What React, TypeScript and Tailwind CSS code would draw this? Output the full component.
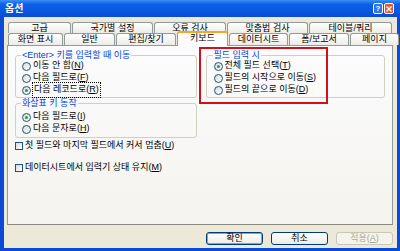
import type { ReactNode } from 'react';

const BACK_TABS: [string, number][] = [
  ['고급', 63],
  ['국가별 설정', 81],
  ['오류 검사', 72],
  ['맞춤법 검사', 81],
  ['테이블/쿼리', 83],
];

const FRONT_TABS: [string, number][] = [
  ['화면 표시', 55],
  ['일반', 51],
  ['편집/찾기', 60],
  ['키보드', 51],
  ['데이터시트', 59],
  ['폼/보고서', 60],
  ['페이지', 49],
];

function Tab({ label, w, selected }: { label: string; w: number; selected?: boolean }) {
  if (selected) {
    return (
      <div
        style={{ width: w }}
        className="relative z-10 -mt-[2px] h-[15px] shrink-0 rounded-t-[3px] border-x border-t-2 border-x-[#919b9c] border-t-[#f5a623] bg-[#fcfcfe] text-center leading-[11px]"
      >
        {label}
      </div>
    );
  }
  return (
    <div
      style={{ width: w }}
      className="h-full shrink-0 rounded-t-[3px] border-x border-t border-[#919b9c] bg-[linear-gradient(180deg,#ffffff,#ecebe6)] text-center leading-[11px]"
    >
      {label}
    </div>
  );
}

function Radio({ checked, focus, children }: { checked?: boolean; focus?: boolean; children: ReactNode }) {
  return (
    <div className="flex h-[12px] items-center gap-[2px]">
      <span className="flex h-[9px] w-[9px] shrink-0 items-center justify-center rounded-full border border-[#1c5180] bg-[linear-gradient(135deg,#dcd9cf,#ffffff)]">
        {checked && <span className="h-[3px] w-[3px] rounded-full bg-[#2a9a2a]" />}
      </span>
      <span className={focus ? 'px-[1px] outline-1 outline-dotted outline-black' : ''}>{children}</span>
    </div>
  );
}

function Check({ children }: { children: ReactNode }) {
  return (
    <div className="flex h-[12px] items-center gap-[2px]">
      <span className="h-[8px] w-[8px] shrink-0 border border-[#1c5180] bg-[linear-gradient(135deg,#dcd9cf,#ffffff)]" />
      <span>{children}</span>
    </div>
  );
}

function Group({ title, children, className }: { title: string; children: ReactNode; className?: string }) {
  return (
    <fieldset className={`rounded-[3px] border border-[#d0d0bf] px-[6px] ${className ?? ''}`}>
      <legend className="ml-[-1px] px-[1px] leading-[10px] text-[#0046d5]">{title}</legend>
      {children}
    </fieldset>
  );
}

function Button({ children, primary, disabled }: { children: ReactNode; primary?: boolean; disabled?: boolean }) {
  return (
    <div
      className={`flex h-[13px] w-[57px] items-center justify-center rounded-[3px] border leading-none ${
        disabled
          ? 'border-[#c9c7ba] bg-[#f5f4ea] text-[#aca899]'
          : 'border-[#003c74] bg-[linear-gradient(180deg,#ffffff,#ecebe6)]'
      } ${primary ? 'shadow-[inset_0_0_0_1px_#7aa6e8]' : ''}`}
    >
      {children}
    </div>
  );
}

export default function App() {
  return (
    <div className="flex h-[251px] w-[400px] flex-col bg-[#0a4ad6] font-['Liberation_Sans','Noto_Sans_CJK_KR',sans-serif] text-[9px] text-black">
      {/* title bar */}
      <div className="flex h-[17px] items-center justify-between bg-[linear-gradient(180deg,#3b8ff7_0%,#0c60e6_25%,#0756e0_70%,#0a4bd0_100%)] pl-[5px] pr-[6px]">
        <span className="text-[10px] font-bold text-white">옵션</span>
        <div className="flex gap-[1px]">
          <span className="flex h-[11px] w-[10px] items-center justify-center rounded-[2px] border border-white bg-[#2b74f0] text-[8px] font-bold leading-none text-white">?</span>
          <span className="flex h-[11px] w-[10px] items-center justify-center rounded-[2px] border border-white bg-[#e0582e]">
            <svg width="6" height="6" viewBox="0 0 6 6">
              <path d="M0.5 0.5L5.5 5.5M5.5 0.5L0.5 5.5" stroke="white" strokeWidth="1.4" />
            </svg>
          </span>
        </div>
      </div>

      {/* body */}
      <div className="mb-[3px] ml-[4px] mr-[3px] flex flex-1 flex-col bg-[#ece9d8] pl-[3px] pr-[4px] pt-[5px]">
        <div className="ml-[1px] flex h-[11px] gap-[1px]">
          {BACK_TABS.map(([l, w]) => (
            <Tab key={l} label={l} w={w} />
          ))}
        </div>
        <div className="ml-[1px] flex h-[12px] items-start gap-[1px]">
          {FRONT_TABS.map(([l, w]) => (
            <Tab key={l} label={l} w={w} selected={l === '키보드'} />
          ))}
        </div>

        <div className="relative flex h-[180px] gap-[9px] border border-[#919b9c] border-b-[#8c8a80] bg-[linear-gradient(180deg,#fcfcfe,#f4f3ee)] px-[7px] pt-[4px]">
          <div className="flex w-[182px] flex-col">
            <Group title="<Enter> 키를 입력할 때 이동" className="pb-[1px]">
              <Radio>
                이동 안 함(<u>N</u>)
              </Radio>
              <Radio>
                다음 필드로(<u>F</u>)
              </Radio>
              <Radio checked focus>
                다음 레코드로(<u>R</u>)
              </Radio>
            </Group>
            <Group title="화살표 키 동작" className="pb-[2px]">
              <div className="mt-[3px]" />
              <Radio checked>
                다음 필드로(<u>I</u>)
              </Radio>
              <Radio>
                다음 문자로(<u>H</u>)
              </Radio>
            </Group>
            <div className="mt-[2px]">
              <Check>
                첫 필드와 마지막 필드에서 커서 멈춤(<u>U</u>)
              </Check>
            </div>
            <div className="mt-[10px]">
              <Check>
                데이터시트에서 입력기 상태 유지(<u>M</u>)
              </Check>
            </div>
          </div>

          <div className="flex w-[180px] flex-col">
            <Group title="필드 입력 시" className="pb-[1px] pl-[7px]">
              <Radio checked>
                전체 필드 선택(<u>T</u>)
              </Radio>
              <Radio>
                필드의 시작으로 이동(<u>S</u>)
              </Radio>
              <Radio>
                필드의 끝으로 이동(<u>D</u>)
              </Radio>
            </Group>
          </div>

          {/* annotation highlight */}
          <div className="pointer-events-none absolute left-[191px] top-[1px] h-[57px] w-[129px] border-2 border-[#d0101a]" />
        </div>

        <div className="mt-[7px] flex justify-end gap-[8px]">
          <Button primary>확인</Button>
          <Button>취소</Button>
          <Button disabled>
            적용(<u>A</u>)
          </Button>
        </div>
      </div>
    </div>
  );
}
